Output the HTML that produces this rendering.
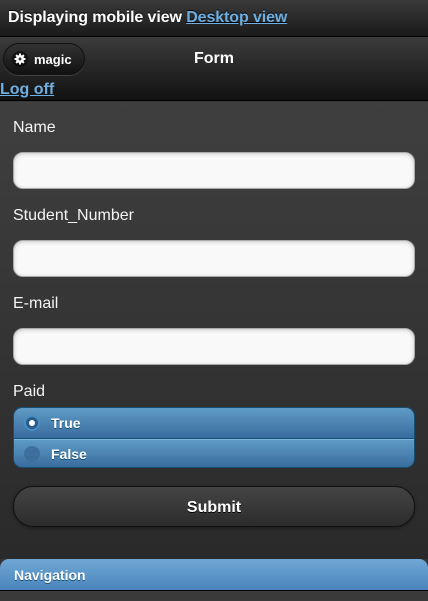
<!DOCTYPE html>
<html><head><style>
*{box-sizing:border-box;margin:0;padding:0}
body{width:428px;height:601px;overflow:hidden;background:#363636;font-family:"Liberation Sans",Arial,sans-serif;position:relative;color:#fff}
.abs{position:absolute}
.top{left:0;top:0;width:428px;height:37px;background:linear-gradient(#3a3a3a,#1a1a1a);border-bottom:1px solid #000;font-weight:bold;font-size:16px;padding:9px 0 0 8px;text-shadow:0 -1px 0 #000;letter-spacing:-0.1px}
a{color:#6faee0;text-decoration:underline}
.hdr{left:0;top:37px;width:428px;height:64px;background:linear-gradient(#3c3c3c,#111);border-bottom:1px solid #000}
.btn{left:3px;top:6px;width:82px;height:32px;border-radius:16px;border:1px solid #111;background:linear-gradient(#333,#111);box-shadow:0 1px 0 rgba(255,255,255,.15);font-size:13px;font-weight:bold;padding:8px 0 0 30px}
.gear{position:absolute;left:8px;top:7px;width:16px;height:16px;border-radius:50%;background:rgba(0,0,0,.5)}
.content{left:0;top:102px;width:428px;height:457px;background:linear-gradient(#3f3f3f,#2a2a2a)}
.lbl{left:13px;font-size:16px;color:#f4f4f4}
.inp{left:13px;width:402px;height:37px;border-radius:10px;background:#f9f9f9;border:1px solid #aaa;box-shadow:inset 0 1px 4px rgba(0,0,0,.2)}
.rg{left:13px;top:407px;width:402px;height:61px;border-radius:9px;overflow:hidden;border:1px solid #145072}
.ri{height:30px;background:linear-gradient(#5f9cc5,#396b9e);font-size:14px;font-weight:bold;padding:7px 0 0 37px;position:relative;text-shadow:0 1px 0 #145072}
.ri+.ri{border-top:1px solid #145072;box-shadow:inset 0 1px 0 #7db4dd}
.dot{position:absolute;left:10px;top:7px;width:16px;height:16px;border-radius:50%}
.sub{left:13px;top:486px;width:402px;height:41px;border-radius:20px;border:1px solid #111;background:linear-gradient(#444,#2c2c2c);text-align:center;font-size:16px;font-weight:bold;padding-top:12px;box-shadow:0 1px 3px rgba(0,0,0,.4);text-shadow:0 1px 0 #000}
.nav{left:0;top:559px;width:428px;height:32px;border-radius:9px 9px 0 0;background:linear-gradient(#6fa8d6,#4a84bb);border-bottom:1px solid #000;font-size:14px;font-weight:bold;padding:8px 0 0 14px;text-shadow:0 1px 0 #145072}
.bot{left:0;top:591px;width:428px;height:10px;background:#3a3a3a}
</style></head><body>
<div class="abs top">Displaying mobile view <a>Desktop view</a></div>
<div class="abs hdr">
<div class="abs btn"><div class="gear"><svg width="16" height="16" viewBox="0 0 16 16"><g fill="#fff"><circle cx="8" cy="8" r="4"/><rect x="7" y="2.5" width="2" height="11"/><rect x="2.5" y="7" width="11" height="2"/><rect x="7" y="2.5" width="2" height="11" transform="rotate(45 8 8)"/><rect x="7" y="2.5" width="2" height="11" transform="rotate(-45 8 8)"/></g><circle cx="8" cy="8" r="1.5" fill="#333"/></svg></div>magic</div>
<div class="abs" style="left:0;width:428px;top:13px;text-align:center;font-size:16px;font-weight:bold">Form</div>
<div class="abs" style="left:0;top:44px;font-size:16px;font-weight:bold"><a>Log off</a></div>
</div>
<div class="abs content"></div>
<div class="abs lbl" style="top:119px">Name</div>
<div class="abs inp" style="top:152px"></div>
<div class="abs lbl" style="top:207px">Student_Number</div>
<div class="abs inp" style="top:240px"></div>
<div class="abs lbl" style="top:295px">E-mail</div>
<div class="abs inp" style="top:328px"></div>
<div class="abs lbl" style="top:383px">Paid</div>
<div class="abs rg">
<div class="ri"><div class="dot" style="background:#2a5c8a;border:2px solid #4a8cc4"><div style="width:6px;height:6px;border-radius:50%;background:#fff;margin:3px"></div></div>True</div>
<div class="ri"><div class="dot" style="background:#3e6f9c"></div>False</div>
</div>
<div class="abs sub">Submit</div>
<div class="abs nav">Navigation</div>
<div class="abs bot"></div>
</body></html>
